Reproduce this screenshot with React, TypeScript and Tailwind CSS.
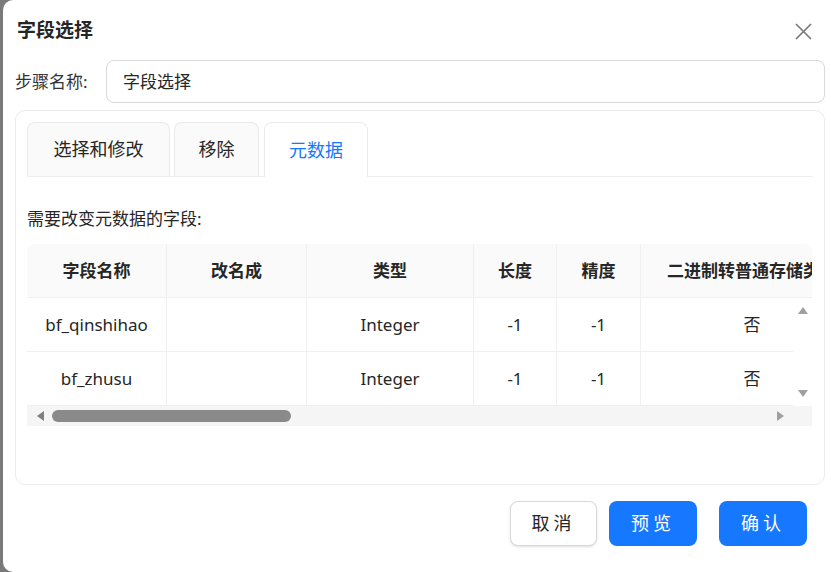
export default function App() {
  const f = { fontFamily: '"Noto Sans", "Noto Sans CJK SC", sans-serif' };
  const cols = ["w-[140px]", "w-[140px]", "w-[167px]", "w-[83px]", "w-[84px]", "w-[222px]"];
  const head = ["字段名称", "改名成", "类型", "长度", "精度", "二进制转普通存储类型"];
  const rows = [
    ["bf_qinshihao", "", "Integer", "-1", "-1", "否"],
    ["bf_zhusu", "", "Integer", "-1", "-1", "否"],
  ];
  return (
    <div className="w-[831px] h-[572px] bg-[#7a7a7a] overflow-hidden" style={f}>
      <div className="ml-[3px] w-[840px] h-[572px] bg-white rounded-l-[10px] relative text-[#262626]">
        <div className="h-[60px] flex items-center pl-[14px] text-[19px] font-bold">字段选择</div>
        <svg className="absolute left-[792px] top-[23px]" width="17" height="17" viewBox="0 0 17 17">
          <path d="M1 1L16 16M16 1L1 16" stroke="#777" strokeWidth="1.6" />
        </svg>
        <div className="flex items-center h-[43px] pl-[12px]">
          <span className="text-[17px] w-[91px] text-[#333]">步骤名称:</span>
          <div className="w-[719px] h-[43px] border border-[#d9d9d9] rounded-[8px] flex items-center px-[16px] text-[17px]">字段选择</div>
        </div>
        <div className="ml-[12px] mt-[7px] w-[810px] h-[375px] border border-[#ececec] rounded-[10px] pt-[11px] pl-[11px]">
          <div className="flex items-end h-[55px] border-b border-[#eeeeee] w-[786px] gap-[4px] text-[18px]">
            <div className="w-[143px] h-[54px] bg-[#fafafa] border border-[#eaeaea] border-b-0 rounded-t-[8px] flex items-center justify-center">选择和修改</div>
            <div className="w-[85px] h-[54px] bg-[#fafafa] border border-[#eaeaea] border-b-0 rounded-t-[8px] flex items-center justify-center">移除</div>
            <div className="ml-[1px] w-[104px] h-[55px] mb-[-1px] bg-white border border-[#eaeaea] border-b-0 rounded-t-[8px] flex items-center justify-center text-[#1677ff]">元数据</div>
          </div>
          <div className="mt-[30px] text-[17px] h-[24px] leading-[24px]">需要改变元数据的字段:</div>
          <div className="mt-[13px] w-[785px] overflow-hidden rounded-t-[8px] text-[17px]">
            <div className="flex h-[54px] bg-[#fafafa] font-bold border-b border-[#f0f0f0]">
              {head.map((h, i) => (
                <div key={i} className={`${cols[i]} shrink-0 flex items-center justify-center whitespace-nowrap overflow-hidden ${i < 5 ? "border-r border-[#f0f0f0]" : ""}`}>{h}</div>
              ))}
            </div>
            <div className="relative">
              {rows.map((r, ri) => (
                <div key={ri} className="flex h-[54px] border-b border-[#f0f0f0]">
                  {r.map((c, i) => (
                    <div key={i} className={`${cols[i]} shrink-0 flex items-center justify-center ${i < 5 ? "border-r border-[#f0f0f0]" : ""}`}>{c}</div>
                  ))}
                </div>
              ))}
              <div className="absolute right-0 top-0 w-[19px] h-[108px] bg-white flex flex-col items-center justify-between py-[9px]">
                <div className="w-0 h-0 border-x-[5px] border-x-transparent border-b-[7px] border-b-[#a0a0a0]" />
                <div className="w-0 h-0 border-x-[5px] border-x-transparent border-t-[7px] border-t-[#a0a0a0]" />
              </div>
            </div>
            <div className="h-[20px] bg-[#f5f5f5] flex items-center px-[10px] gap-[8px]">
              <div className="w-0 h-0 border-y-[5px] border-y-transparent border-r-[7px] border-r-[#808080]" />
              <div className="w-[239px] h-[12px] rounded-full bg-[#8a8a8a]" />
              <div className="flex-1" />
              <div className="mr-[18px] w-0 h-0 border-y-[5px] border-y-transparent border-l-[7px] border-l-[#a0a0a0]" />
            </div>
          </div>
        </div>
        <div className="flex mt-[16px] ml-[507px] gap-[12px] text-[18px]">
          <button className="w-[87px] h-[45px] border border-[#d9d9d9] rounded-[8px] bg-white tracking-[4px] shadow-sm">取消</button>
          <button className="w-[88px] h-[45px] rounded-[8px] bg-[#1677ff] text-white tracking-[4px]">预览</button>
          <button className="ml-[10px] w-[88px] h-[45px] rounded-[8px] bg-[#1677ff] text-white tracking-[4px]">确认</button>
        </div>
      </div>
    </div>
  );
}
